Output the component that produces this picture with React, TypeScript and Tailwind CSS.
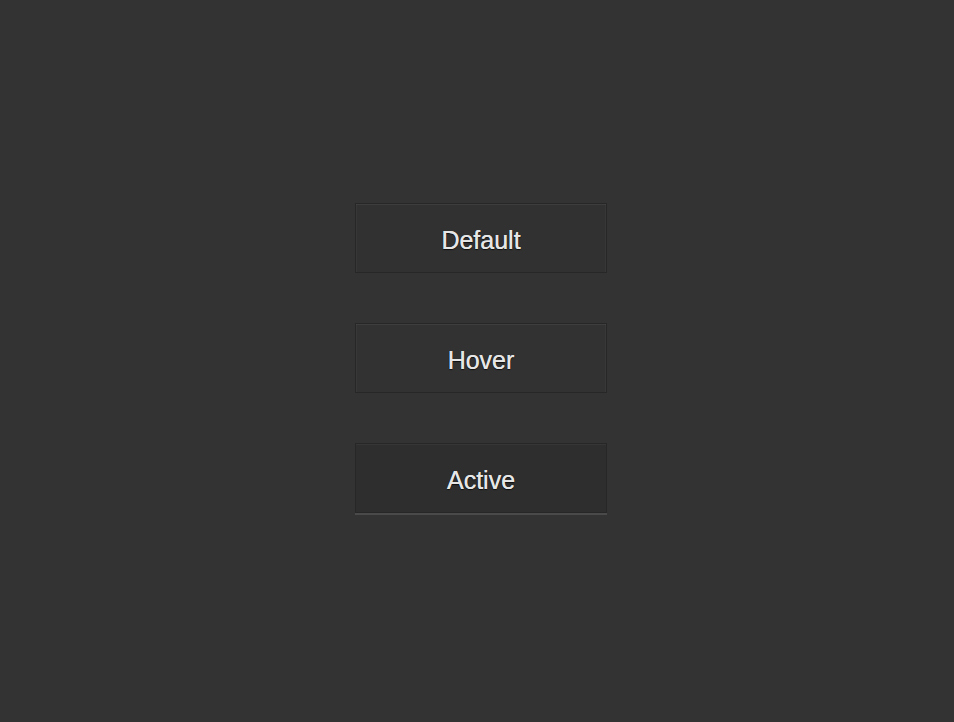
import React from "react";

function Btn({ label, active, hover }: { label: string; active?: boolean; hover?: boolean }) {
  return (
    <div className={active ? "border-b-2 border-[#4a4a4a]" : ""}>
      <button
        className={
          "w-[252px] h-[70px] flex items-center justify-center pt-[5px] border border-[#272727] text-[25px] text-[#e6e6e6] [font-family:'Liberation_Sans',Arial,sans-serif] [text-shadow:0_0_0.4px_#e6e6e6,0_1px_1px_rgba(0,0,0,0.7)] " +
          (active
            ? "bg-[#2e2e2e] shadow-[inset_0_1px_0_rgba(255,255,255,0.04)]"
            : hover
            ? "bg-[#323232] shadow-[inset_0_1px_0_rgba(255,255,255,0.06),inset_1px_0_0_rgba(255,255,255,0.03),inset_-1px_0_0_rgba(255,255,255,0.03)]"
            : "bg-[#313131] shadow-[inset_0_1px_0_rgba(255,255,255,0.06),inset_1px_0_0_rgba(255,255,255,0.03),inset_-1px_0_0_rgba(255,255,255,0.03)]")
        }
      >
        {label}
      </button>
    </div>
  );
}

export default function App() {
  return (
    <div className="w-[954px] h-[722px] bg-[#333333] flex flex-col items-center pt-[203px] pl-[8px] gap-[50px]">
      <Btn label="Default" />
      <Btn label="Hover" hover />
      <Btn label="Active" active />
    </div>
  );
}
